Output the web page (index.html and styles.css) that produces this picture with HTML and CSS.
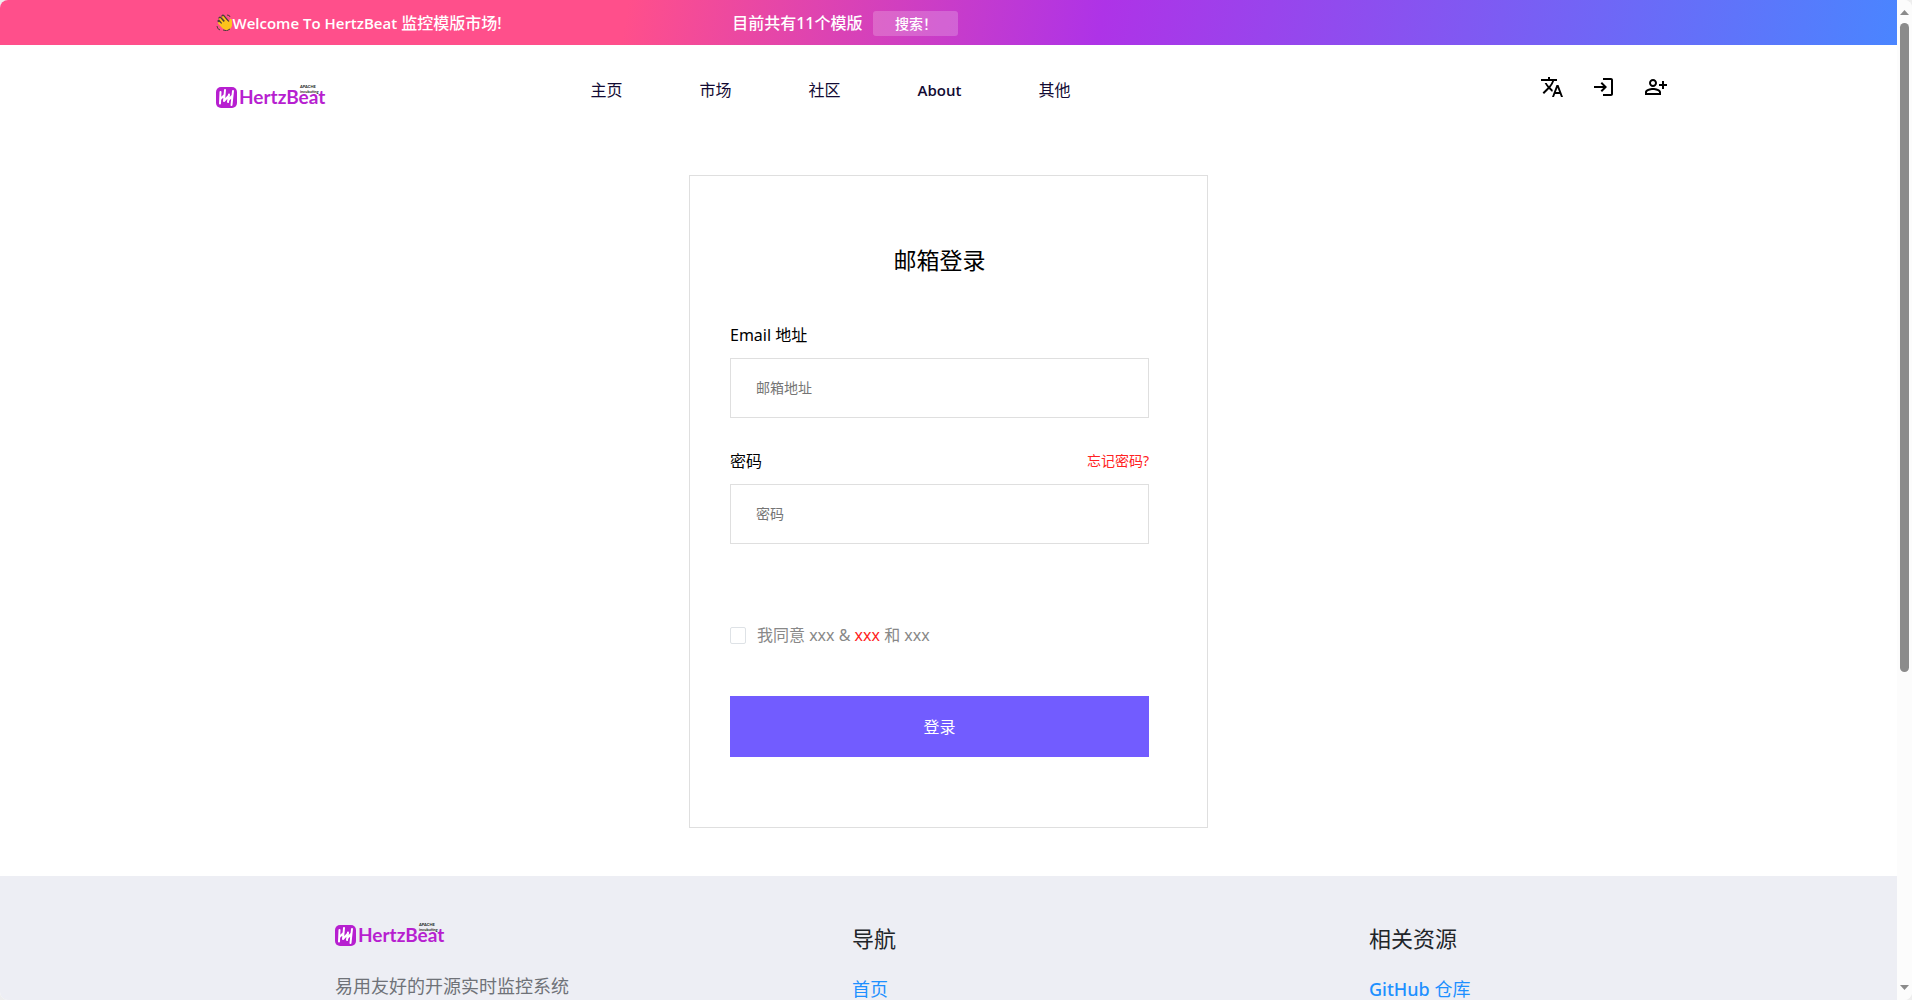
FILE: index.html
```html
<!DOCTYPE html>
<html lang="zh-CN">
<head>
<meta charset="utf-8">
<title>HertzBeat 监控模版市场</title>
<link rel="stylesheet" href="styles.css">
</head>
<body>
<div class="window">
  <div class="page">
    <div class="topbar">
      <div class="container topbar-row">
        <p class="welcome"><svg class="wave" viewBox="0 0 17 17" aria-hidden="true"><path d="M3 7L7 11M4 4L9 9M7 2L12 8" stroke="#4b4038" stroke-width="3" stroke-linecap="round"/><path d="M6 12L3 9M8 10L4 5M11 8L7 3" stroke="#fcc21b" stroke-width="2" stroke-linecap="round"/><path d="M5 10L10 6L13 8L14 5Q16 4 16 7L16 12Q14 17 10 16Q6 15 4 11Z" fill="#fcc21b"/><path d="M1 12Q1 15 4 16M11 1Q14 1 14 3M7 16Q11 18 14 15" fill="none" stroke="#4b4038"/></svg><span><span class="latin">Welcome To HertzBeat</span> 监控模版市场!</span></p>
        <div class="count"><span>目前共有11个模版</span><button class="search" type="button">搜索！</button></div>
      </div>
    </div>
    <header class="container header">
      <a class="brand" href="#" aria-label="HertzBeat">
        <svg class="logo" viewBox="0 0 116 24">
          <rect x="0" y="3" width="21" height="21" rx="5" fill="#b71fd0"/>
          <path d="M4.500 8L4 19.500M4.500 15L8.500 11M9 6L8 17M8 17L13 11.500M13 10.500L12 18M12.500 16L16 12M17 7L15.500 21" fill="none" stroke="#fff" stroke-width="2" stroke-linecap="round" stroke-linejoin="round"/>
          <text class="logo-name" x="23" y="20">HertzBeat</text>
          <text class="logo-note" x="84" y="4">APACHE</text>
          <text class="logo-note" x="84" y="9">incubating</text>
        </svg>
      </a>
      <nav class="nav">
        <a href="#">主页</a><a href="#">市场</a><a href="#">社区</a><a href="#" class="latin">About</a><a href="#">其他</a>
      </nav>
      <div class="tools">
        <button type="button" aria-label="语言"><svg viewBox="0 0 24 24"><path d="M12.870 15.070l-2.540-2.510.03-.03A17.520 17.520 0 0 0 14.070 6H17V4h-7V2H8v2H1v2h11.170C11.500 7.920 10.440 9.750 9 11.350 8.070 10.320 7.300 9.190 6.690 8h-2c.73 1.630 1.730 3.170 2.980 4.560l-5.090 5.020L4 19l5-5 3.110 3.110.76-2.040zM18.500 10h-2L12 22h2l1.120-3h4.750L21 22h2l-4.500-12zm-2.620 7l1.620-4.330L19.120 17h-3.240z"/></svg></button>
        <button type="button" aria-label="登录"><svg viewBox="0 0 24 24"><path d="M10 7L8.600 8.400l2.600 2.600H2v2h9.200l-2.600 2.600L10 17l5-5-5-5zm9 12h-8v2h8c1.100 0 2-.9 2-2V5c0-1.100-.9-2-2-2h-8v2h8v14z"/></svg></button>
        <button type="button" aria-label="注册"><svg viewBox="0 0 24 24"><path d="M9 12c2.210 0 4-1.790 4-4s-1.790-4-4-4-4 1.790-4 4 1.790 4 4 4zm0-6c1.100 0 2 .9 2 2s-.9 2-2 2-2-.9-2-2 .9-2 2-2zm0 7c-2.670 0-8 1.340-8 4v3h16v-3c0-2.660-5.330-4-8-4zm6 5H3v-.99C3.200 16.290 6.300 15 9 15s5.800 1.290 6 2v1zM20 9V6h-2v3h-3v2h3v3h2v-3h3V9z"/></svg></button>
      </div>
    </header>
    <main class="main">
      <form class="card">
        <h1>邮箱登录</h1>
        <div class="field">
          <div class="label-row"><label for="email">Email 地址</label></div>
          <input class="input" id="email" type="email" placeholder="邮箱地址">
        </div>
        <div class="field">
          <div class="label-row"><label for="password">密码</label><a class="forgot" href="#">忘记密码?</a></div>
          <input class="input" id="password" type="password" placeholder="密码">
        </div>
        <div class="agree"><input id="agree" type="checkbox"><label for="agree">我同意 xxx &amp; <a href="#">xxx</a> 和 xxx</label></div>
        <button class="submit" type="submit">登录</button>
      </form>
    </main>
    <footer class="footer">
      <section>
        <svg class="logo" viewBox="0 0 116 24" role="img" aria-label="HertzBeat">
          <rect x="0" y="3" width="21" height="21" rx="5" fill="#b71fd0"/>
          <path d="M4.500 8L4 19.500M4.500 15L8.500 11M9 6L8 17M8 17L13 11.500M13 10.500L12 18M12.500 16L16 12M17 7L15.500 21" fill="none" stroke="#fff" stroke-width="2" stroke-linecap="round" stroke-linejoin="round"/>
          <text class="logo-name" x="23" y="20">HertzBeat</text>
          <text class="logo-note" x="84" y="4">APACHE</text>
          <text class="logo-note" x="84" y="9">incubating</text>
        </svg>
        <p>易用友好的开源实时监控系统</p>
      </section>
      <section><h2>导航</h2><a href="#">首页</a></section>
      <section><h2>相关资源</h2><a href="#"><b>GitHub</b> 仓库</a></section>
    </footer>
  </div>
  <div class="scrollbar" aria-hidden="true">
    <svg viewBox="0 0 9 5"><path d="M0 5L4.500 0L9 5Z"/></svg>
    <div class="track"><div class="thumb"></div></div>
    <svg viewBox="0 0 9 5"><path d="M0 0L4.500 5L9 0Z"/></svg>
  </div>
</div>
</body>
</html>
```
FILE: styles.css
```css
* { box-sizing: border-box; }
body {
  margin: 0;
  background: #eee;
  color: #000;
  font: 16px/24px "Noto Sans", "Noto Sans CJK SC", sans-serif;
}
a { color: inherit; text-decoration: none; }
p, h1, h2 { margin: 0; font-weight: 400; }
button { border: 0; padding: 0; font: inherit; cursor: pointer; }
.latin { font-family: "Open Sans", sans-serif; font-size: 15px; font-weight: 600; }

.window {
  display: flex;
  height: 100vh;
  overflow: hidden;
  border-radius: 8px;
  background: #fff;
}
.page { flex: 1; min-width: 0; overflow: hidden; }
.container { width: 78%; max-width: 1466px; margin: 0 auto; }

.topbar {
  color: #fff;
  background: linear-gradient(100deg, #ff4f8b 33%, #ae33e7 58%, #4a85ff 100%);
}
.topbar-row {
  display: grid;
  grid-template-columns: 517fr 950fr;
  align-items: center;
  height: 45px;
}
.welcome { display: flex; align-items: center; font-weight: 500; white-space: nowrap; }
.wave { width: 17px; height: 17px; fill: none; }
.count { display: flex; align-items: center; gap: 11px; font-weight: 500; }
.search {
  width: 85px;
  height: 25px;
  margin-top: 2px;
  border-radius: 3px;
  background: rgb(255 255 255 / 20%);
  color: #fff;
  font-size: 14px;
  font-weight: 500;
  line-height: 23px;
}

.header {
  display: grid;
  grid-template-columns: 375fr 949fr auto;
  align-items: start;
  padding: 26px 14px 0 0;
}
.logo { display: block; width: 116px; height: 24px; overflow: visible; }
.brand { padding: 13px 0 2px; }
.logo-name { font: 700 19px "Lato", sans-serif; fill: #b71fd0; }
.logo-note { font: 700 4px "Lato", sans-serif; fill: #222; }
.nav { display: flex; gap: 77px; padding-top: 7px; color: #120a33; }
.tools { display: flex; gap: 28px; }
.tools button { display: block; padding: 4px 0; background: none; }
.tools svg { display: block; width: 24px; height: 24px; }

.main { padding: 65px 20px 48px; }
.card {
  width: 100%;
  max-width: 519px;
  margin: 0 auto;
  padding: 68px 58px 70px 40px;
  border: 1px solid #dfdfdf;
}
.card h1 { font-size: 23px; line-height: 32px; text-align: center; }
.field { margin-top: 27px; }
.card h1 + .field { margin-top: 43px; }
.label-row { display: flex; justify-content: space-between; height: 39px; line-height: 32px; }
.forgot { color: #f22; font-size: 14px; }
.input {
  display: block;
  width: 100%;
  height: 60px;
  padding: 0 25px 2px;
  border: 1px solid #dfdfdf;
  font: inherit;
  font-size: 14px;
}
.input::placeholder { color: #757575; }
.agree { display: flex; align-items: center; gap: 11px; margin-top: 79px; color: #888; }
.agree input {
  appearance: none;
  width: 16px;
  height: 17px;
  margin: 0;
  border: 1px solid #dee2e6;
  border-radius: 2px;
}
.agree a { color: #f22; }
.submit {
  display: block;
  width: 100%;
  height: 61px;
  margin-top: 49px;
  background: #725cff;
  color: #fff;
}

.footer {
  display: grid;
  grid-template-columns: repeat(3, 1fr);
  min-height: 300px;
  padding: 46px 11px 40px 335px;
  background: #edeef4;
  font-size: 18px;
  line-height: 28px;
}
.footer p { margin-top: 26px; color: #6f7278; }
.footer h2 { color: #212529; font-size: 22px; line-height: 32px; }
.footer a { display: block; margin-top: 21px; color: #1e90ff; }
.footer b { font-weight: 500; }

.scrollbar {
  display: flex;
  flex-direction: column;
  align-items: center;
  gap: 8px;
  width: 15px;
  padding: 10px 0;
  background: #fcfcfc;
}
.scrollbar svg { width: 9px; height: 5px; fill: #8b8b8b; }
.track { flex: 1; }
.thumb { width: 9px; height: 68%; border-radius: 5px; background: #8b8b8b; }
```
